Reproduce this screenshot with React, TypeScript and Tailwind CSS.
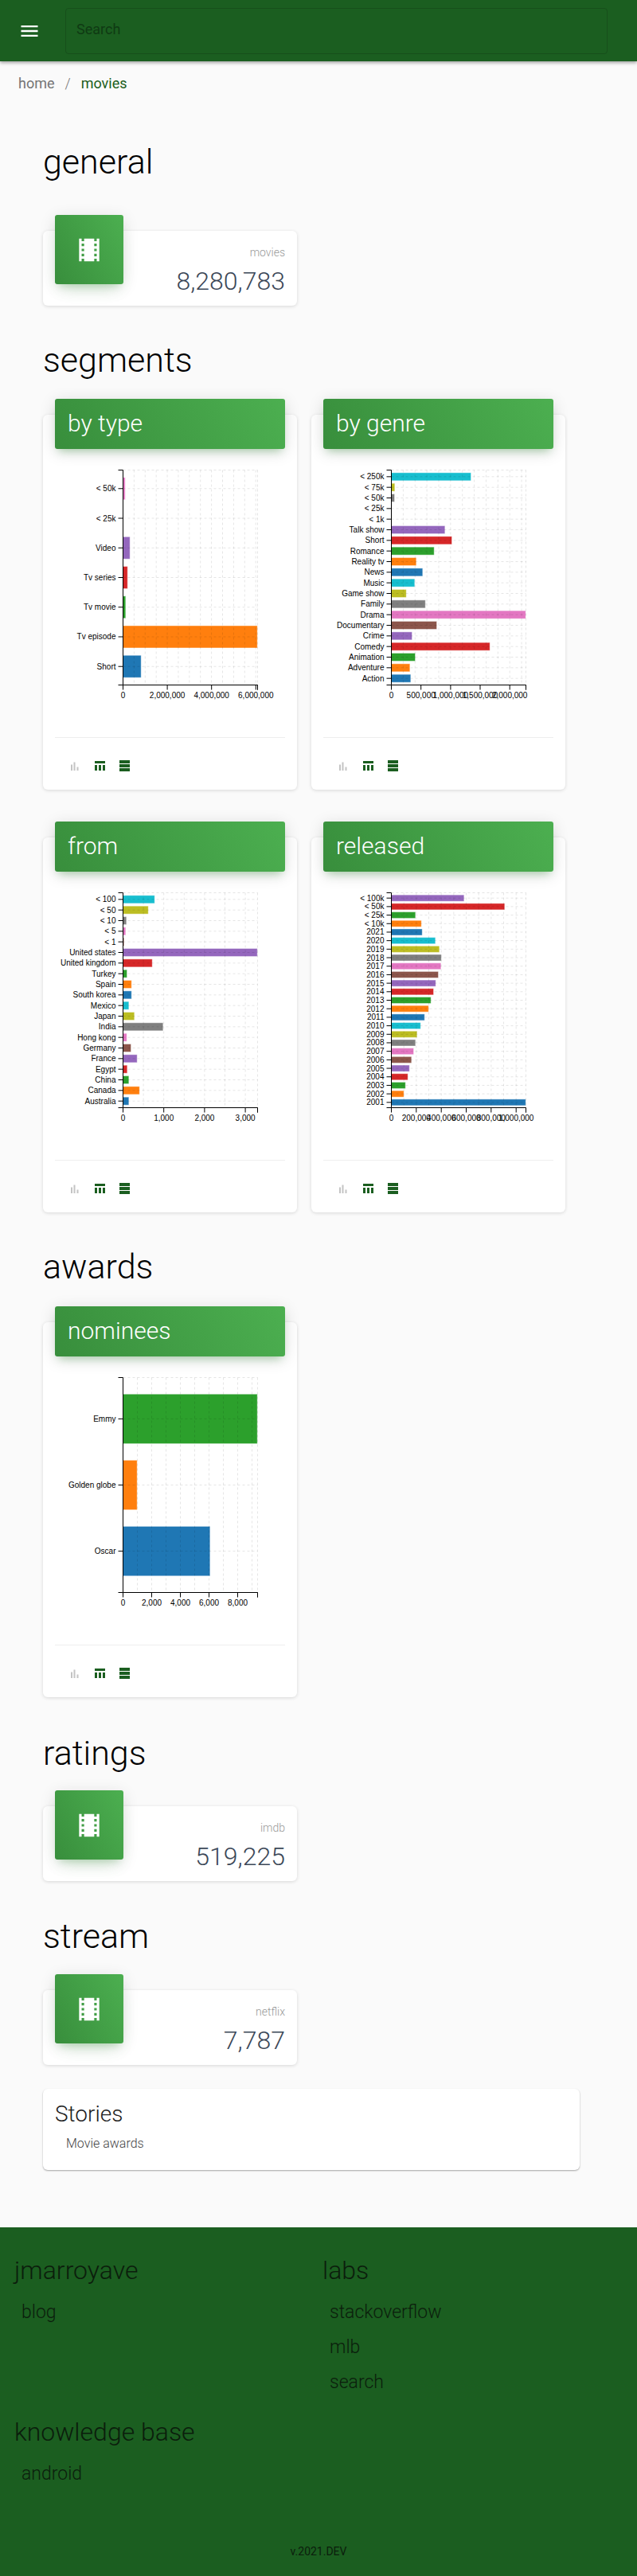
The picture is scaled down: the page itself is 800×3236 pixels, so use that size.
const palette = ["#1f77b4", "#ff7f0e", "#2ca02c", "#d62728", "#9467bd", "#8c564b", "#e377c2", "#7f7f7f", "#bcbd22", "#17becf"];

const GREEN_TILE = "bg-[linear-gradient(60deg,#388e3c,#4caf50)]";

type Bar = [string, number];
type ChartProps = {
  bars: Bar[];
  gridStep: number;
  ticks: [number, string][];
};

// bars are listed bottom-up, widths are in px on a 169px wide axis
const byType: Bar[] = [["Short", 22.7], ["Tv episode", 168.7], ["Tv movie", 3.3], ["Tv series", 5.7], ["Video", 8.7], ["< 25k", 0], ["< 50k", 2.7]];
const byGenre: Bar[] = [["Action", 24.3], ["Adventure", 23.3], ["Animation", 30], ["Comedy", 123.7], ["Crime", 26], ["Documentary", 57], ["Drama", 168.7], ["Family", 42.7], ["Game show", 18.7], ["Music", 29.3], ["News", 39.3], ["Reality tv", 31.3], ["Romance", 53.7], ["Short", 76], ["Talk show", 67.3], ["< 1k", 0], ["< 25k", 0], ["< 50k", 4], ["< 75k", 4.3], ["< 250k", 100]];
const from: Bar[] = [["Australia", 7.3], ["Canada", 20.7], ["China", 7.3], ["Egypt", 5.3], ["France", 17.7], ["Germany", 10], ["Hong kong", 4.7], ["India", 50.3], ["Japan", 14.3], ["Mexico", 7.3], ["South korea", 10.7], ["Spain", 10.7], ["Turkey", 5], ["United kingdom", 36.7], ["United states", 168.7], ["< 1", 1.3], ["< 5", 3.3], ["< 10", 4.3], ["< 50", 31.7], ["< 100", 39.7]];
const released: Bar[] = [["2001", 168.7], ["2002", 15.7], ["2003", 17.7], ["2004", 20.7], ["2005", 22.7], ["2006", 25.3], ["2007", 28], ["2008", 30.3], ["2009", 32.3], ["2010", 36.7], ["2011", 41.7], ["2012", 46.7], ["2013", 49.7], ["2014", 53], ["2015", 55.7], ["2016", 59], ["2017", 62.3], ["2018", 62.7], ["2019", 60.3], ["2020", 55.3], ["2021", 38.7], ["< 10k", 37.7], ["< 25k", 30.3], ["< 50k", 142.3], ["< 100k", 91.3]];
const nominees: Bar[] = [["Oscar", 109.3], ["Golden globe", 17.7], ["Emmy", 168.7]];

function BarChart({ bars, gridStep, ticks }: ChartProps) {
  const W = 169;
  const H = 270;
  const X0 = 85.5;
  // band scale with 0.25 padding
  const step = H / (bars.length + 0.25);
  const barHeight = step * 0.75;
  const centers = bars.map((_, i) => H - step * (i + 0.625));
  const gridX: number[] = [];
  for (let x = gridStep; x < W - 1; x += gridStep) gridX.push(x);
  gridX.push(W);

  return (
    <svg width={289} height={300} className="block overflow-visible font-['Liberation_Sans',sans-serif]">
      <g transform={`translate(${X0} 0.5)`}>
        {bars.map(([label, w], i) =>
          w > 0 ? (
            <rect key={label} x={0} y={centers[i] - barHeight / 2} width={w} height={barHeight} fill={palette[i % 10]} stroke="#fff" strokeOpacity={0.4} />
          ) : null
        )}
        <g stroke="#000" strokeOpacity={0.1} strokeDasharray="3 3">
          {gridX.map((x) => (
            <line key={x} x1={x} x2={x} y1={0} y2={H} />
          ))}
          <line x1={0} x2={W} y1={0} y2={0} />
          {centers.map((y) => (
            <line key={y} x1={0} x2={W} y1={y} y2={y} />
          ))}
        </g>
        <path d={`M-6 0H0V${H}H-6M0 ${H}H${W}V${H + 6}`} fill="none" stroke="#000" />
        {centers.map((y, i) => (
          <g key={y}>
            <line x1={-6} x2={0} y1={y} y2={y} stroke="#000" />
            <text x={-9} y={y + 3.5} textAnchor="end" fontSize={10} fill="#000">
              {bars[i][0]}
            </text>
          </g>
        ))}
        <text x={0} y={H + 16} textAnchor="middle" fontSize={10} fill="#000">0</text>
        <line x1={0} x2={0} y1={H} y2={H + 6} stroke="#000" />
        {ticks.map(([x, label]) => (
          <g key={x}>
            <line x1={x} x2={x} y1={H} y2={H + 6} stroke="#000" />
            {label ? (
              <text x={x} y={H + 16} textAnchor="middle" fontSize={10} fill="#000">
                {label}
              </text>
            ) : null}
          </g>
        ))}
      </g>
    </svg>
  );
}

function FilmIcon() {
  return (
    <svg width={38} height={38} viewBox="0 0 24 24" fill="#fff">
      <path d="M18 3v2h-2V3H8v2H6V3H4v18h2v-2h2v2h8v-2h2v2h2V3h-2zM8 17H6v-2h2v2zm0-4H6v-2h2v2zm0-4H6V7h2v2zm10 8h-2v-2h2v2zm0-4h-2v-2h2v2zm0-4h-2V7h2v2z" />
    </svg>
  );
}

function ChartIcons() {
  return (
    <div className="flex items-center pl-[20px] pt-[5px] h-[65px]">
      <svg width={10} height={11} viewBox="0 0 10 11" fill="#c4c4c4" className="mr-[20px]">
        <rect x={0} y={3.5} width={2} height={7.5} />
        <rect x={3.5} y={0.5} width={2} height={10.5} />
        <rect x={7.5} y={6.5} width={2} height={4.5} />
      </svg>
      <svg width={13} height={12} viewBox="0 0 13 12" fill="#1b5e20" className="mr-[18px]">
        <rect x={0} y={0} width={13} height={3} />
        <rect x={0} y={5} width={3} height={7} />
        <rect x={5} y={5} width={3} height={7} />
        <rect x={10} y={5} width={3} height={7} />
      </svg>
      <svg width={13} height={14} viewBox="0 0 13 14" fill="#1b5e20">
        <rect x={0} y={0} width={13} height={4} />
        <rect x={0} y={5} width={13} height={4} />
        <rect x={0} y={10} width={13} height={4} />
      </svg>
    </div>
  );
}

function ChartCard({ title, ...chart }: ChartProps & { title: string }) {
  return (
    <div className="flow-root w-[319px] h-[471px] rounded-[6px] bg-white shadow-[0_1px_4px_rgba(0,0,0,0.14)] px-[15px]">
      <div className={`-mt-[20px] h-[63px] rounded-[3px] px-[16px] pb-[2px] flex items-center text-[30px] font-light text-white ${GREEN_TILE} shadow-[0_4px_20px_rgba(0,0,0,0.14),0_7px_10px_-5px_rgba(76,175,80,0.4)]`}>
        {title}
      </div>
      <div className="pt-[26px] h-[363px] border-b border-[#eee]">
        <BarChart {...chart} />
      </div>
      <ChartIcons />
    </div>
  );
}

function StatCard({ label, value }: { label: string; value: string }) {
  return (
    <div className="w-[319px] h-[94px] rounded-[6px] bg-white shadow-[0_1px_4px_rgba(0,0,0,0.14)] flex justify-between px-[15px]">
      <div className={`-mt-[20px] w-[86px] h-[87px] rounded-[3px] flex items-center justify-center ${GREEN_TILE} shadow-[0_12px_20px_-10px_rgba(76,175,80,0.28),0_4px_20px_rgba(0,0,0,0.12),0_7px_8px_-5px_rgba(76,175,80,0.2)]`}>
        <FilmIcon />
      </div>
      <div className="text-right">
        <div className="mt-[17px] text-[14px] leading-[20px] font-light text-[#999]">{label}</div>
        <div className="mt-[6px] text-[32px] leading-[40px] font-light text-[#3c4858]">{value}</div>
      </div>
    </div>
  );
}

function Heading({ children, className }: { children: string; className: string }) {
  return <h3 className={`h-[50px] leading-[50px] text-[43px] font-light text-black ${className}`}>{children}</h3>;
}

function FooterColumn({ title, links, className }: { title: string; links: string[]; className?: string }) {
  return (
    <div className={className}>
      <div className="h-[40px] leading-[40px] text-[32px] font-light text-[#0b1d0c]">{title}</div>
      <div className="mt-[11px] pl-[9px]">
        {links.map((l) => (
          <div key={l} className="h-[44px] leading-[44px] text-[23px] font-light text-[#0b1d0c]">
            {l}
          </div>
        ))}
      </div>
    </div>
  );
}

export default function App() {
  return (
    <div className="w-[800px] h-[3236px] bg-[#fafafa] font-[Roboto,sans-serif] flex flex-col">
      <header className="h-[77px] bg-[#1b5e20] shadow-[0_2px_4px_rgba(0,0,0,0.35)] flex items-center shrink-0 relative">
        <div className="w-[82px] flex justify-center">
          <svg width={28} height={28} viewBox="0 0 24 24" fill="#fff" className="-ml-[8px]">
            <path d="M3 18h18v-2H3v2zm0-5h18v-2H3v2zm0-7v2h18V6H3z" />
          </svg>
        </div>
        <div className="w-[681px] h-[58px] rounded-[4px] border border-[#174f1b] flex items-center pl-[13px] pb-[4px] text-[18px] text-[#0f3a13]">
          Search
        </div>
      </header>

      <nav className="h-[50px] shrink-0 flex items-center pl-[23px] pt-[4px] text-[18px] text-[#757575]">
        <span>home</span>
        <span className="mx-[13px] font-light">/</span>
        <span className="text-[#1b5e20]">movies</span>
      </nav>

      <main className="ml-[54px] w-[674px]">
        <Heading className="mt-[51px] mb-[62px]">general</Heading>
        <StatCard label="movies" value="8,280,783" />

        <Heading className="mt-[43px] mb-[44px]">segments</Heading>
        <div className="grid grid-cols-[319px_319px] gap-x-[18px] gap-y-[60px]">
          <ChartCard title="by type" bars={byType} gridStep={13.89} ticks={[[55.6, "2,000,000"], [111.2, "4,000,000"], [166.8, "6,000,000"], [169, ""]]} />
          <ChartCard title="by genre" bars={byGenre} gridStep={14.87} ticks={[[37.2, "500,000"], [74.4, "1,000,000"], [111.5, "1,500,000"], [148.7, "2,000,000"], [169, ""]]} />
          <ChartCard title="from" bars={from} gridStep={25.6} ticks={[[51.2, "1,000"], [102.4, "2,000"], [153.6, "3,000"], [169, ""]]} />
          <ChartCard title="released" bars={released} gridStep={15.67} ticks={[[31.3, "200,000"], [62.7, "400,000"], [94, "600,000"], [125.3, "800,000"], [156.7, "1,000,000"], [169, ""]]} />
        </div>

        <Heading className="mt-[43px] mb-[45px]">awards</Heading>
        <ChartCard title="nominees" bars={nominees} gridStep={18} ticks={[[36, "2,000"], [72, "4,000"], [108, "6,000"], [144, "8,000"], [169, ""]]} />

        <Heading className="mt-[45px] mb-[42px]">ratings</Heading>
        <StatCard label="imdb" value="519,225" />

        <Heading className="mt-[44px] mb-[43px]">stream</Heading>
        <StatCard label="netflix" value="7,787" />

        <div className="mt-[30px] h-[102px] rounded-[6px] bg-white shadow-[0_1px_2px_rgba(0,0,0,0.35)] pl-[15px] pt-[15px]">
          <div className="text-[28px] leading-[34px] font-light text-[#212121]">Stories</div>
          <div className="mt-[8px] pl-[14px] text-[16px] leading-[24px] font-light text-[#444]">Movie awards</div>
        </div>
      </main>

      <footer className="mt-[72px] flex-1 bg-[#1b5e20] pl-[18px] pt-[34px]">
        <div className="grid grid-cols-[387px_387px]">
          <FooterColumn title="jmarroyave" links={["blog"]} />
          <FooterColumn title="labs" links={["stackoverflow", "mlb", "search"]} />
          <FooterColumn title="knowledge base" links={["android"]} className="mt-[20px]" />
        </div>
        <div className="mt-[65px] -ml-[18px] text-center text-[14px] leading-[21px] text-[#0b1d0c]">v.2021.DEV</div>
      </footer>
    </div>
  );
}
